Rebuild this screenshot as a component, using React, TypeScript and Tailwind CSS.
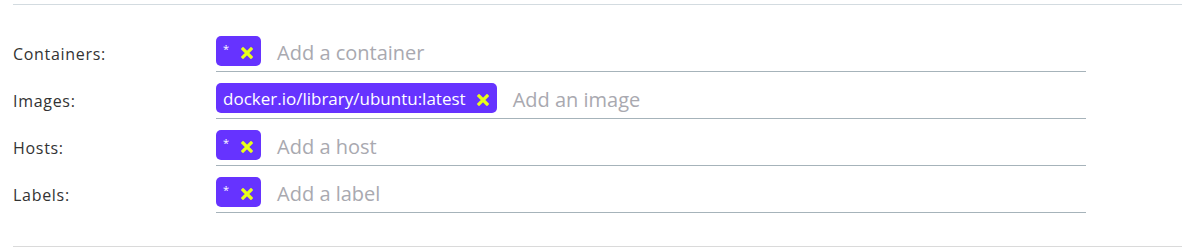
import React from "react";

const X = () => (
  <svg width="12" height="12" viewBox="0 0 12 12" className="shrink-0">
    <path d="M2 2 L10 10 M10 2 L2 10" stroke="#e8ff1a" strokeWidth="3.2" strokeLinecap="square" />
  </svg>
);

const Chip = ({ text }: { text: string }) => (
  <div className="flex h-[30px] items-center rounded-[5px] bg-[#6633ff] pl-[7px] pr-[8px] text-white">
    {text === "*" ? (
      <span className="mr-[12px] -mt-[6px] text-[11px] leading-none">*</span>
    ) : (
      <span className="mr-[11px] text-[17px] leading-none">{text}</span>
    )}
    <span className="mt-[4px]"><X /></span>
  </div>
);

const Row = ({ label, chip, placeholder }: { label: string; chip: string; placeholder: string }) => (
  <div className="flex items-start">
    <div className="w-[203px] pt-[6px] text-[16px] tracking-[0.7px] text-[#333]">{label}</div>
    <div className="flex w-[870px] items-center gap-[16px] border-b border-[#a6b3ba] pb-[5px]">
      <Chip text={chip} />
      <span className="pt-[3px] text-[20px] leading-none text-[#a9a9b0]">{placeholder}</span>
    </div>
  </div>
);

export default function App() {
  return (
    <div className="h-[251px] w-[1195px] bg-white pt-[4px] font-['Open_Sans',sans-serif]">
      <div className="mx-[13px] border-t border-[#d3dbe0]" />
      <div className="flex flex-col gap-[11px] pl-[13px] pt-[31px]">
        <Row label="Containers:" chip="*" placeholder="Add a container" />
        <Row label="Images:" chip="docker.io/library/ubuntu:latest" placeholder="Add an image" />
        <Row label="Hosts:" chip="*" placeholder="Add a host" />
        <Row label="Labels:" chip="*" placeholder="Add a label" />
      </div>
      <div className="mx-[13px] mt-[33px] border-t border-[#dadada]" />
    </div>
  );
}
